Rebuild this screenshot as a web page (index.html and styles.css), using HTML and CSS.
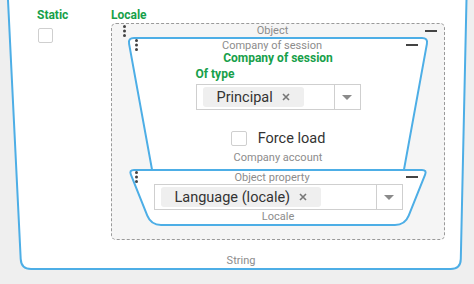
FILE: index.html
```html
<!DOCTYPE html>
<html lang="en">
<head>
    <meta charset="UTF-8">
    <meta name="viewport" content="width=device-width, initial-scale=1.0">
    <title>Locale</title>
    <link rel="stylesheet" href="styles.css">
</head>
<body>
    <div class="frame">
        <svg class="frame-bg" width="474" height="284">
            <path d="M 7.5,-10 L 466.7,-10 L 460.8,259 Q 460.6,269 450.6,269 L 31,269 Q 21.2,269 20.7,259 Z" />
        </svg>

        <div class="columns">
            <div class="col-static">
                <div class="title">Static</div>
                <span class="check"></span>
            </div>

            <div class="col-locale">
                <div class="title">Locale</div>
                <div class="object">
                    <div class="head head-object">
                        <svg class="dots" width="3" height="12"><circle cx="1.5" cy="1.5" r="1.5"/><circle cx="1.5" cy="6" r="1.5"/><circle cx="1.5" cy="10.5" r="1.5"/></svg>
                        <span class="caption">Object</span>
                        <span class="minus"></span>
                    </div>

                    <div class="shape shape-company">
                        <!-- lower part runs under the property shape -->
                        <svg class="shape-bg" width="302" height="161">
                            <path d="M 7,1 L 295,1 Q 301,1 299.9,6.9 L 272,160 L 30,160 L 2.1,6.9 Q 1,1 7,1 Z" />
                        </svg>
                        <div class="shape-body">
                            <div class="head">
                                <svg class="dots" width="3" height="12"><circle cx="1.5" cy="1.5" r="1.5"/><circle cx="1.5" cy="6" r="1.5"/><circle cx="1.5" cy="10.5" r="1.5"/></svg>
                                <span class="caption">Company of session</span>
                                <span class="minus"></span>
                            </div>
                            <div class="title center">Company of session</div>
                            <div class="field">
                                <div class="title">Of type</div>
                                <div class="select">
                                    <div class="select-value">
                                        <span class="tag">Principal
                                            <svg width="8" height="8"><path d="M1,1 L7,7 M7,1 L1,7" /></svg>
                                        </span>
                                    </div>
                                    <div class="select-arrow">
                                        <svg width="10" height="5"><path d="M0,0 L10,0 L5,5 Z" /></svg>
                                    </div>
                                </div>
                            </div>
                            <div class="check-row"><span class="check"></span>Force load</div>
                            <div class="caption">Company account</div>
                        </div>
                    </div>

                    <div class="shape shape-prop">
                        <svg class="shape-bg" width="300" height="57">
                            <path d="M 6,1 L 294,1 Q 299,1 297.1,5.6 L 280.7,46.7 Q 277,56 267,56 L 33,56 Q 23,56 19.3,46.7 L 2.9,5.6 Q 1,1 6,1 Z" />
                        </svg>
                        <div class="shape-body">
                            <div class="head">
                                <svg class="dots" width="3" height="12"><circle cx="1.5" cy="1.5" r="1.5"/><circle cx="1.5" cy="6" r="1.5"/><circle cx="1.5" cy="10.5" r="1.5"/></svg>
                                <span class="caption">Object property</span>
                                <span class="minus"></span>
                            </div>
                            <div class="select prop-select">
                                <div class="select-value">
                                    <span class="tag">Language (locale)
                                        <svg width="8" height="8"><path d="M1,1 L7,7 M7,1 L1,7" /></svg>
                                    </span>
                                </div>
                                <div class="select-arrow">
                                    <svg width="10" height="5"><path d="M0,0 L10,0 L5,5 Z" /></svg>
                                </div>
                            </div>
                            <div class="caption">Locale</div>
                        </div>
                    </div>
                </div>
            </div>
        </div>

        <div class="caption string">String</div>
    </div>
</body>
</html>
```

FILE: styles.css
```css
body{
    margin: 0;
    background-color: #efefef;
    font-family: Roboto, "Liberation Sans", sans-serif;
    overflow: hidden;
}
.frame{
    position: relative;
    width: 474px;
    height: 284px;
}
.frame-bg{
    position: absolute;
    left: 0;
    top: 0;
}
.frame-bg path,.shape-bg path{
    fill: #fff;
    stroke: #4daee6;
    stroke-width: 2;
}
.columns{
    position: relative;
    display: flex;
    padding-top: 8px;
}
.col-static{
    margin-left: 37px;
    width: 74px;
}
.col-locale{
    width: 334px;
}
.title{
    font-size: 12px;
    font-weight: 700;
    line-height: 14px;
    color: #17a04a;
}
.title.center{
    text-align: center;
}
.check{
    display: block;
    box-sizing: border-box;
    width: 15px;
    height: 15px;
    border: 1px solid #cfcfcf;
    border-radius: 2px;
    background-color: #fff;
}
.col-static .check{
    margin: 6px 0 0 1px;
}
.caption{
    font-size: 11px;
    line-height: 13px;
    color: #8c8c8c;
    text-align: center;
}
.object{
    margin-top: 1px;
    border: 1px dashed #9a9a9a;
    border-radius: 5px;
    background-color: #f5f5f5;
    padding-bottom: 13px;
}
.head{
    display: flex;
    align-items: center;
    height: 12px;
    padding-top: 2px;
}
.head .caption{
    flex: 1;
}
.head-object{
    height: 13px;
    padding: 0 7px 0 11px;
}
.head-object .caption{
    padding-right: 6px;
}
.dots{
    display: block;
    fill: #444;
}
.minus{
    width: 12px;
    height: 2px;
    background-color: #444;
}
.shape{
    position: relative;
}
.shape-bg{
    position: absolute;
    left: 0;
    top: 0;
}
.shape-body{
    position: relative;
}
.shape-company{
    margin: 0 15px;
    height: 133px;
}
.shape-company .head{
    padding-left: 8px;
    padding-right: 11px;
}
.shape-prop{
    margin: -1px 16px 0;
    height: 57px;
}
.shape-prop .head{
    padding-left: 7px;
    padding-right: 10px;
}
.field{
    width: 165px;
    margin: 2px auto 0;
}
.field .title{
    margin-bottom: 3px;
}
.select{
    display: flex;
    box-sizing: border-box;
    height: 26px;
    border: 1px solid #cfcfcf;
    background-color: #fff;
}
.prop-select{
    width: 249px;
    margin: 1px auto 0;
}
.select-value{
    flex: 1;
    display: flex;
    align-items: center;
    padding-left: 6px;
}
.select-arrow{
    box-sizing: border-box;
    width: 26px;
    border-left: 1px solid #cfcfcf;
    display: flex;
    align-items: center;
    justify-content: center;
}
.select-arrow svg{
    fill: #8a8a8a;
}
.tag{
    display: inline-flex;
    align-items: center;
    gap: 9px;
    height: 20px;
    padding: 0 14px;
    border-radius: 3px;
    background-color: #efefef;
    font-size: 14.5px;
    color: #333;
}
.tag svg path{
    stroke: #777;
    stroke-width: 1.6;
}
.check-row{
    display: flex;
    justify-content: center;
    align-items: center;
    gap: 11px;
    margin-top: 20px;
    font-size: 14.5px;
    line-height: 17px;
    color: #333;
}
.check-row .check{
    width: 16px;
}
.shape-company .shape-body > .caption{
    margin-top: 4px;
}
.string{
    position: relative;
    margin-top: 14px;
    padding-left: 8px;
}
```
